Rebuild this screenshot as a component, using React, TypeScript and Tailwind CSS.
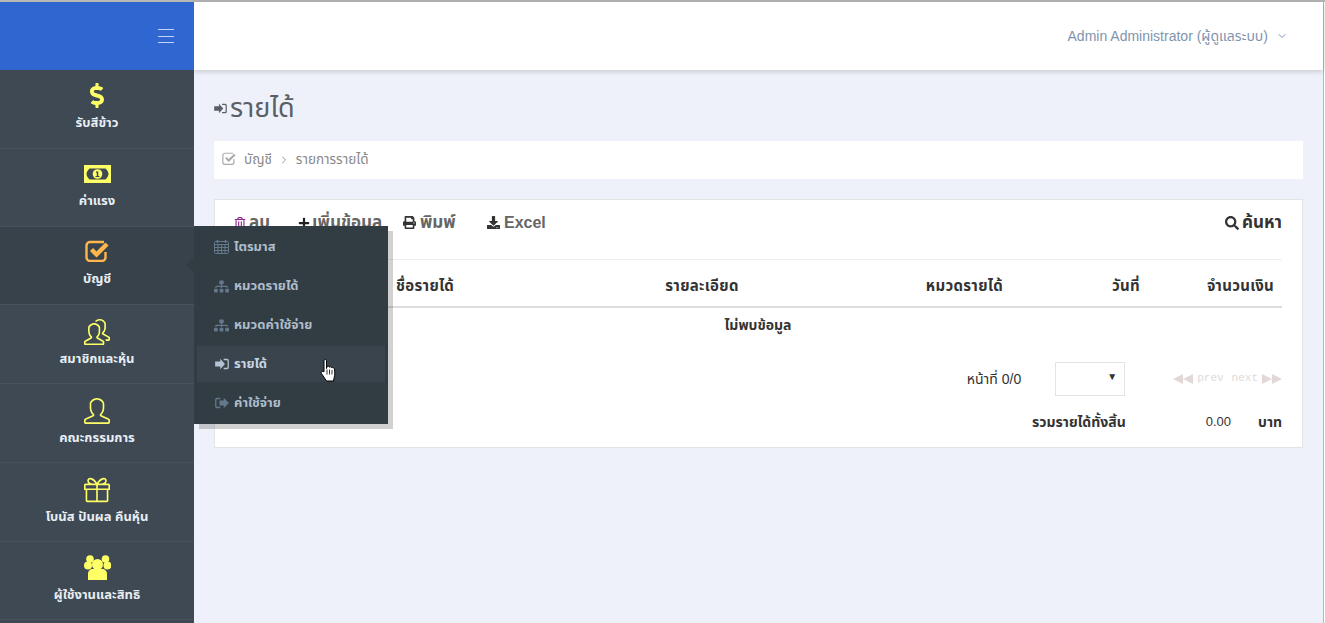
import React from 'react';
import {
  FaDollarSign,
  FaDownload,
  FaPlus,
  FaPrint,
  FaRegTrashAlt,
  FaSearch,
  FaSitemap,
} from 'react-icons/fa';
import { SlPeople, SlPresent, SlUser } from 'react-icons/sl';
import { LuChevronDown, LuChevronRight } from 'react-icons/lu';

const SignIn = ({ className }: { className?: string }) => (
  <svg viewBox="0 0 16 14" className={className} fill="currentColor">
    <path d="M0 4h6V1l5.500 6L6 13v-3H0z" />
    <path d="M10 1h4a2 2 0 0 1 2 2v8a2 2 0 0 1-2 2h-4v-1.500h3.500a1 1 0 0 0 1-1v-7a1 1 0 0 0-1-1H10z" />
  </svg>
);

const SignOut = ({ className }: { className?: string }) => (
  <svg viewBox="0 0 16 14" className={className} fill="currentColor">
    <path d="M5 4h5V1l6 6-6 6v-3H5z" />
    <path d="M6 1H2a2 2 0 0 0-2 2v8a2 2 0 0 0 2 2h4v-1.500H2.500a1 1 0 0 1-1-1v-7a1 1 0 0 1 1-1H6z" />
  </svg>
);

// open-cornered box with a heavy tick, like fa-check-square-o
const CheckBox = ({ className, heavy }: { className?: string; heavy?: boolean }) => (
  <svg viewBox="0 0 24 22" className={className} fill="none" stroke="currentColor">
    <path d="M19 2H5a3.500 3.500 0 0 0-3.500 3.500v12A3.500 3.500 0 0 0 5 21h12a3.500 3.500 0 0 0 3.500-3.500V12" strokeWidth={heavy ? 2.4 : 2} />
    <path d="M6.500 9.500l5 5L22 4" strokeWidth={heavy ? 4.4 : 3.6} />
  </svg>
);

const CalendarGrid = () => (
  <svg viewBox="0 0 15 14" className="h-[14px] w-[15px]" fill="none" stroke="#64788c" strokeWidth="1">
    <rect x="0.500" y="1.500" width="14" height="12" rx="1" />
    <path d="M0.500 4.500h14M0.500 7.500h14M0.500 10.500h14M4 4.500v9M7.500 4.500v9M11 4.500v9" />
    <path d="M3.500 0v3M11.500 0v3" strokeWidth="1.600" />
  </svg>
);

const Money = () => (
  <svg viewBox="0 0 27 18" className="h-[18px] w-[27px]">
    <rect width="27" height="18" fill="#ffff66" />
    <path d="M2.500 9c0-2 1.500-4 3-5.500h16c1.500 1.500 3 3.500 3 5.500s-1.500 4-3 5.500h-16c-1.500-1.500-3-3.500-3-5.500z" fill="#3e4953" />
    <circle cx="13.500" cy="9" r="4.800" fill="#ffff66" />
    <path d="M12 6.500h2.300v4.500h1.200v1h-4v-1h1.300V7.700H12z" fill="#3e4953" />
  </svg>
);

const Users = () => (
  <svg viewBox="0 0 27 25" className="h-[25px] w-[27px]" fill="#ffff66">
    <circle cx="6" cy="4" r="3.800" />
    <circle cx="21.500" cy="4" r="3.800" />
    <circle cx="4" cy="10.500" r="4" />
    <circle cx="23.500" cy="10.500" r="4" />
    <circle cx="13.500" cy="9.500" r="5.500" />
    <path d="M4 25v-6c0-3 2-5 5-5h9c3 0 5 2 5 5v6z" />
  </svg>
);

const HandCursor = () => (
  <svg viewBox="0 0 17 24" className="h-[25px] w-[17px]">
    <path
      d="M4 2.200c0-1.600 2.500-1.600 2.500 0V10l.5-1.800c1-.8 2.300-.5 2.500.5.800-.8 2.200-.5 2.400.7.900-.6 2.300-.2 2.500 1 .6 3 .5 6-.2 8.500l-.7 3.600H6.500L1.600 15.200c-1-1.500.5-3.200 2.400-1.800z"
      fill="#fff"
      stroke="#000"
      strokeWidth="1"
    />
    <path d="M7 11v5M9.500 11v5M12 11.500v4.500" stroke="#000" strokeWidth="0.800" fill="none" />
  </svg>
);

const PagerArrows = ({ flip }: { flip?: boolean }) => (
  <svg viewBox="0 0 20 10" className={`h-[10px] w-[20px] ${flip ? 'rotate-180' : ''}`} fill="#e2d8d8">
    <path d="M0 5l10-5v10zM10 5l10-5v10z" />
  </svg>
);

const navItems = [
  { label: 'รับสีข้าว', icon: <FaDollarSign className="h-[25px] w-[24px]" />, row: 'h-[79px] pt-[12px]', text: 'mt-[7px]' },
  { label: 'ค่าแรง', icon: <Money />, row: 'h-[78px] pt-[12px]', text: 'mt-[6px]' },
  { label: 'บัญชี', icon: <CheckBox heavy className="h-[22px] w-[24px] text-[#ffb74d]" />, row: 'h-[78px] pt-[11px] bg-[#38424b]', text: 'mt-[7px]' },
  { label: 'สมาชิกและหุ้น', icon: <SlPeople className="h-[26px] w-[26px]" />, row: 'h-[79px] pt-[14px]', text: 'mt-[6px]' },
  { label: 'คณะกรรมการ', icon: <SlUser className="h-[26px] w-[26px]" />, row: 'h-[79px] pt-[14px]', text: 'mt-[6px]' },
  { label: 'โบนัส ปันผล คืนหุ้น', icon: <SlPresent className="h-[26px] w-[26px]" />, row: 'h-[79px] pt-[14px]', text: 'mt-[6px]' },
  { label: 'ผู้ใช้งานและสิทธิ', icon: <Users />, row: 'h-[78px] pt-[12px]', text: 'mt-[7px]' },
];

const subItems = [
  { label: 'ไตรมาส', icon: <CalendarGrid />, active: false },
  { label: 'หมวดรายได้', icon: <FaSitemap className="h-[15px] w-[15px] text-[#64788c]" />, active: false },
  { label: 'หมวดค่าใช้จ่าย', icon: <FaSitemap className="h-[15px] w-[15px] text-[#64788c]" />, active: false },
  { label: 'รายได้', icon: <SignIn className="h-[12px] w-[14px] text-[#b4c4d4]" />, active: true },
  { label: 'ค่าใช้จ่าย', icon: <SignOut className="h-[12px] w-[14px] text-[#64788c]" />, active: false },
];

const App: React.FC = () => {
  return (
    <div className="h-[623px] w-[1325px] overflow-hidden bg-white font-['Liberation_Sans','Noto_Sans_Thai',Tahoma,sans-serif]">
      <div className="h-[2px] bg-[#b8b8b8]" />
      <div className="flex h-[621px] w-[1324px] border-r border-[#b8b8b8]">
        <aside className="relative z-20 w-[194px] shrink-0 bg-[#3e4953]">
          <div className="flex h-[68px] items-center justify-end bg-[#3066cf] pr-[20px]">
            <div className="flex w-4 flex-col gap-[5.5px]">
              <span className="h-px bg-[#c4d4f2]" />
              <span className="h-px bg-[#c4d4f2]" />
              <span className="h-px bg-[#c4d4f2]" />
            </div>
          </div>
          {navItems.map((item) => (
            <div
              key={item.label}
              className={`${item.row} flex flex-col items-center border-b border-[#47525c] text-[#ffff66]`}
            >
              <div className="flex h-[26px] items-center">{item.icon}</div>
              <p className={`${item.text} text-[13px] leading-4 font-bold text-[#e8eef4]`}>{item.label}</p>
            </div>
          ))}
          <span className="absolute top-[255px] left-[186px] border-y-[8px] border-r-[8px] border-y-transparent border-r-[#323c43]" />
          <div className="absolute top-[224px] left-[194px] h-[198px] w-[194px] bg-[#323c43] pt-[3px] shadow-[5px_5px_0_rgba(0,0,0,0.18)]">
            {subItems.map((item) => (
              <div
                key={item.label}
                className={`mx-[3px] mb-[3px] flex h-[36px] items-center gap-[5px] pl-[17px] text-[13px] font-bold ${
                  item.active ? 'bg-[#3a444c] text-[#c8d6e4]' : 'text-[#aebccb]'
                }`}
              >
                <span className="flex w-[15px] justify-center">{item.icon}</span>
                {item.label}
              </div>
            ))}
            <div className="absolute top-[132px] left-[126px]">
              <HandCursor />
            </div>
          </div>
        </aside>

        <main className="flex min-w-0 flex-1 flex-col bg-[#eef1f9]">
          <header className="relative z-10 flex h-[68px] items-center justify-end bg-white pr-[35px] text-sm text-[#8094ae] shadow-[0_1px_6px_rgba(0,0,0,0.2)]">
            Admin Administrator (ผู้ดูแลระบบ)
            <LuChevronDown className="ml-2 h-3 w-3" />
          </header>

          <div className="px-5 pt-[20px]">
            <h1 className="flex h-9 items-center gap-[3px] text-[27px] text-[#5a5f66]">
              <SignIn className="h-[11px] w-[13px]" />
              รายได้
            </h1>

            <div className="mt-[15px] flex h-[38px] items-center bg-white pl-2 text-[13.500px] text-[#888]">
              <CheckBox className="mb-[4px] h-[13px] w-[14px] text-[#aaa]" />
              <span className="ml-2">บัญชี</span>
              <LuChevronRight className="mx-[6px] h-3 w-3 text-[#999]" />
              <span>รายการรายได้</span>
            </div>

            <section className="mt-5 h-[249px] border border-[#e3e3e3] bg-white pr-[20px] pl-[19px]">
              <div className="flex h-[60px] items-center border-b border-[#eeeeee] pb-[14px] text-[17px] font-bold text-[#666]">
                <span className="flex w-[64px] items-center gap-[3px]">
                  <FaRegTrashAlt className="h-[12px] w-[12px] text-[#8e2a8e]" />
                  ลบ
                </span>
                <span className="flex w-[105px] items-center gap-[2px]">
                  <FaPlus className="h-[12px] w-[12px] text-[#222]" />
                  เพิ่มข้อมูล
                </span>
                <span className="flex w-[84px] items-center gap-[4px]">
                  <FaPrint className="h-[13px] w-[13px] text-[#333]" />
                  พิมพ์
                </span>
                <span className="flex items-center gap-[4px] text-base">
                  <FaDownload className="h-[13px] w-[13px] text-[#333]" />
                  Excel
                </span>
                <span className="ml-auto flex items-center gap-[3px] text-[#333]">
                  <FaSearch className="h-[14px] w-[14px]" />
                  ค้นหา
                </span>
              </div>

              <div className="grid h-[48px] grid-cols-[154px_172px_284px_167px_137px_134px] items-center border-b-2 border-[#dddddd] pt-[6px] text-[15px] font-bold tracking-[0.3px] text-[#333]">
                <span />
                <span className="px-2">ชื่อรายได้</span>
                <span className="px-2 text-center">รายละเอียด</span>
                <span className="px-2 text-right">หมวดรายได้</span>
                <span className="px-2 text-right">วันที่</span>
                <span className="px-2 text-right">จำนวนเงิน</span>
              </div>
              <p className="h-[36px] text-center text-sm leading-[35px] font-bold text-[#333]">ไม่พบข้อมูล</p>

              <div className="mt-[18px] flex h-[34px] items-center justify-end text-sm text-[#333]">
                <span>หน้าที่ 0/0</span>
                <div className="relative ml-[34px] h-[34px] w-[70px] border border-[#e3e3e3]">
                  <span className="absolute top-[7px] right-[7px] text-[10px] text-[#333]">▼</span>
                </div>
                <span className="ml-[48px] flex items-center gap-[4px] font-['Liberation_Mono',monospace] text-[11px] text-[#e2d8d8]">
                  <PagerArrows />
                  prev
                  <span className="ml-[4px]">next</span>
                  <PagerArrows flip />
                </span>
              </div>

              <div className="mt-[16px] flex items-center justify-end text-sm font-bold text-[#333]">
                <span>รวมรายได้ทั้งสิ้น</span>
                <span className="ml-[80px] text-[13px] font-normal">0.00</span>
                <span className="ml-[27px]">บาท</span>
              </div>
            </section>
          </div>
        </main>
      </div>
    </div>
  );
};

export default App;
